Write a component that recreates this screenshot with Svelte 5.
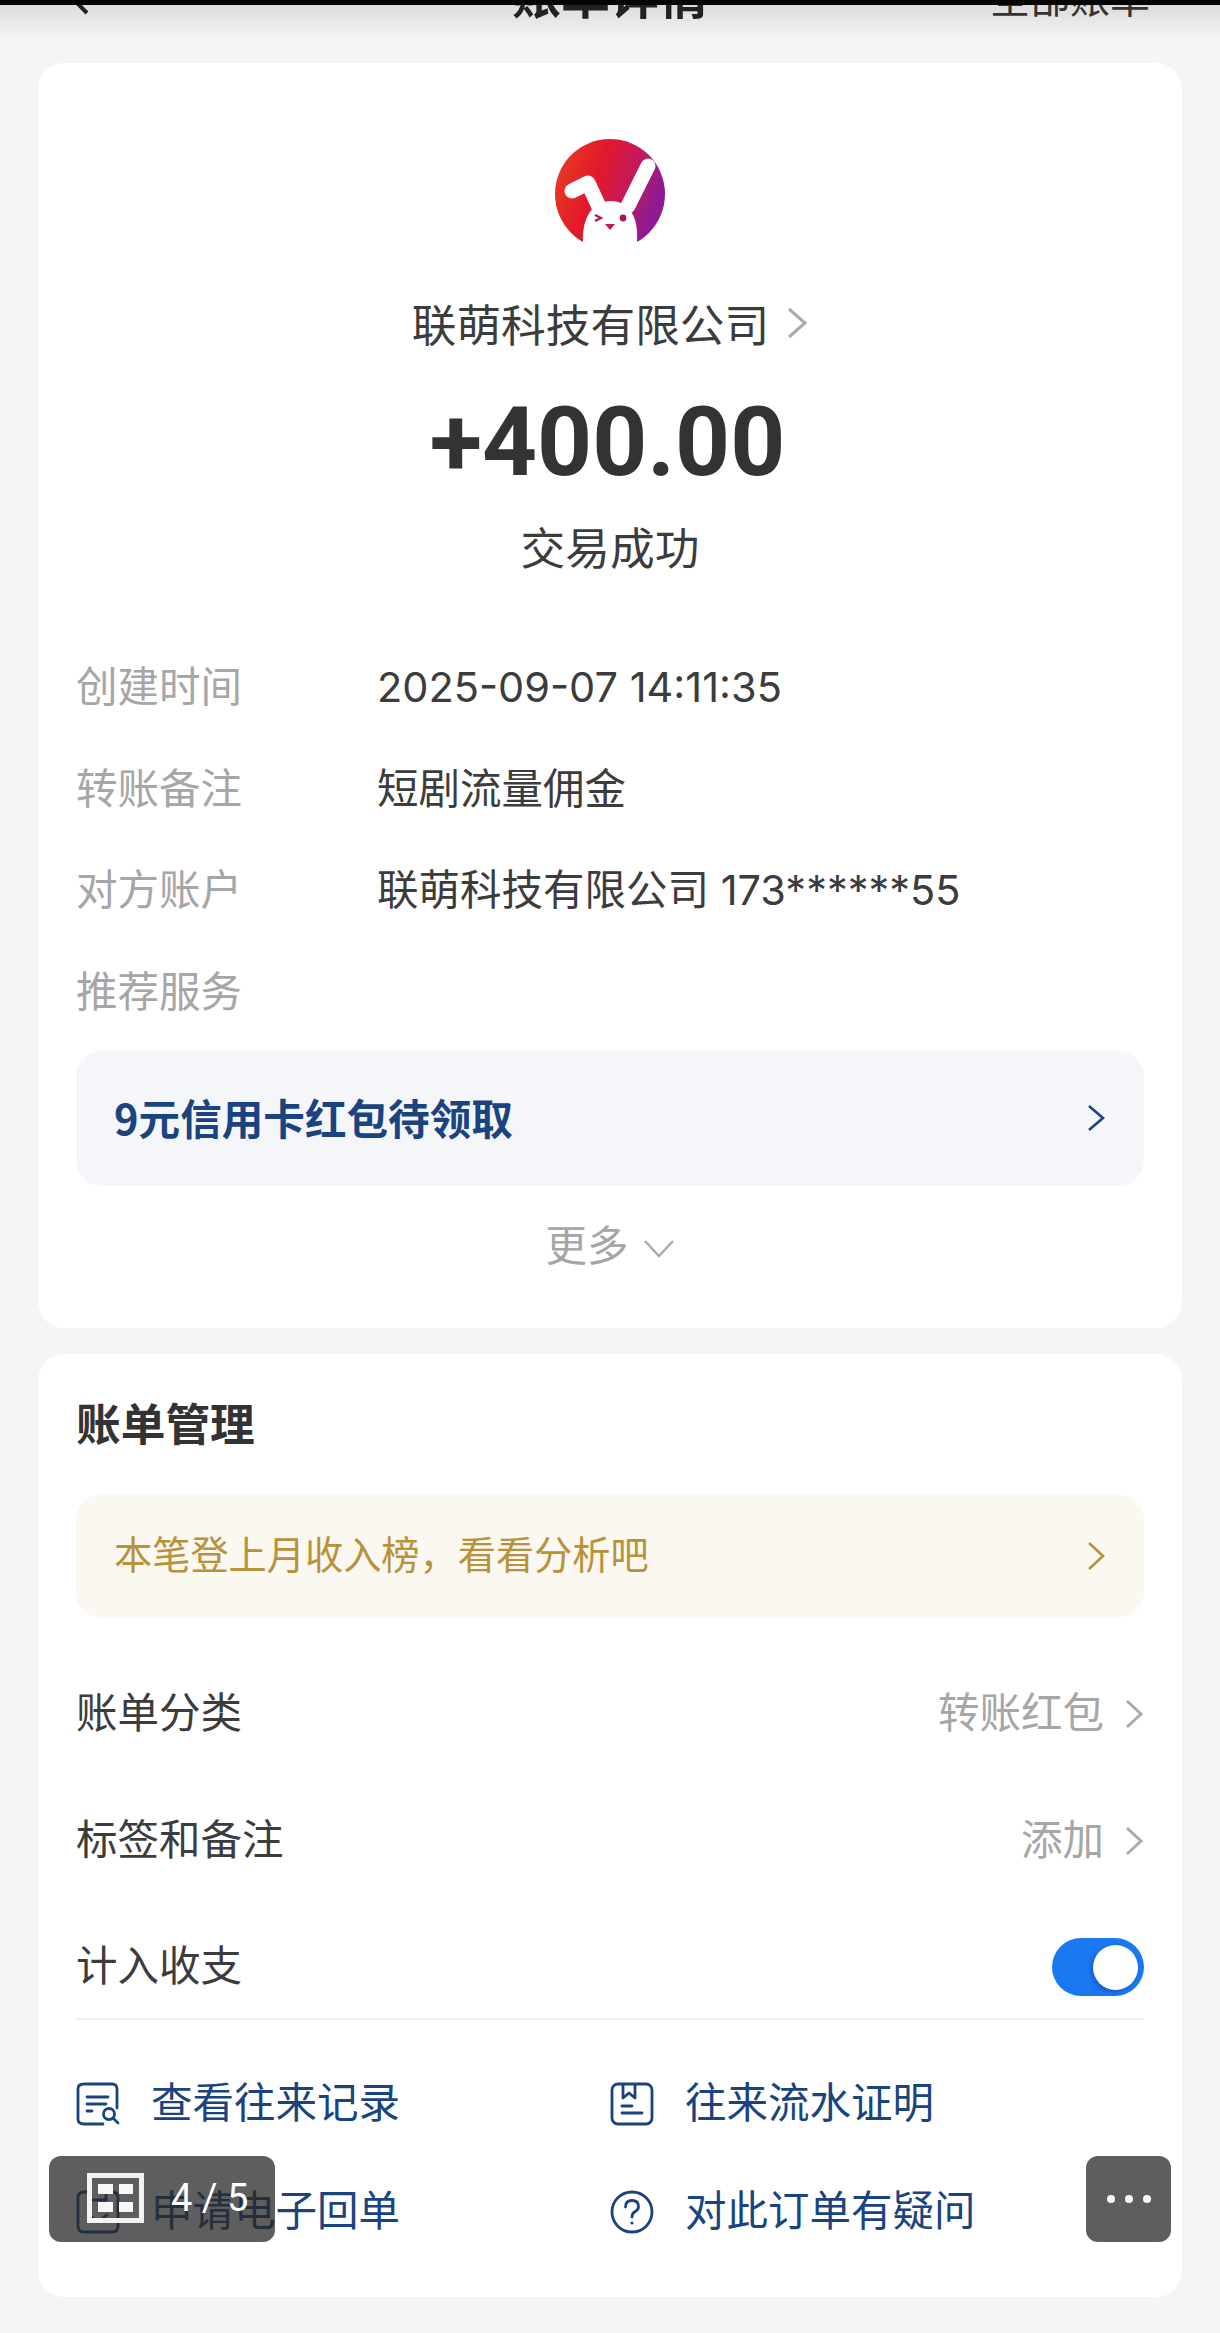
<script>
  const details = [
    { label: '创建时间', value: '2025-09-07 14:11:35' },
    { label: '转账备注', value: '短剧流量佣金' },
    { label: '对方账户', value: '联萌科技有限公司 173******55' },
    { label: '推荐服务', value: '' }
  ];
</script>

<div class="page">
  <div class="topbar"></div>
  <header class="nav">
    <svg class="back" width="20" height="32" viewBox="0 0 20 32"><path d="M17 2 L3 16 L17 30" fill="none" stroke="#222" stroke-width="4"/></svg>
    <span class="nav-title">账单详情</span>
    <span class="nav-right">全部账单</span>
  </header>

  <section class="card first">
    <svg class="logo" width="110" height="110" viewBox="0 0 110 110">
      <defs>
        <linearGradient id="lg" x1="0" y1="0" x2="1" y2="0.35">
          <stop offset="0" stop-color="#e8421f"/>
          <stop offset="0.45" stop-color="#e3182b"/>
          <stop offset="0.75" stop-color="#c01a5f"/>
          <stop offset="1" stop-color="#8e1a92"/>
        </linearGradient>
      </defs>
      <circle cx="55" cy="55" r="55" fill="url(#lg)"/>
      <path d="M93 27 L73 67" stroke="#fff" stroke-width="15" stroke-linecap="round" fill="none"/>
      <path d="M17 52 L33 44 L45 70" stroke="#fff" stroke-width="15" stroke-linecap="round" stroke-linejoin="round" fill="none"/>
      <path d="M28 110 V103 C27 78 38 62 56 62 C74 62 84 78 82 103 V110 Z" fill="#fff"/>
      <path d="M40 76 L46 79 L40 82" fill="none" stroke="#a3195b" stroke-width="2.2"/>
      <circle cx="68" cy="79" r="3.4" fill="#a3195b"/>
      <path d="M50 85 H60 L55 91 Z" fill="#c2185b"/>
    </svg>
    <div class="merchant">
      <span>联萌科技有限公司</span>
      <svg width="22" height="34" viewBox="0 0 22 34"><path d="M3 3 L19 17 L3 31" fill="none" stroke="#aaa" stroke-width="3"/></svg>
    </div>
    <div class="amount">+400.00</div>
    <div class="status">交易成功</div>

    <dl class="details">
      {#each details as d}
        <div class="detail">
          <dt>{d.label}</dt>
          <dd>{d.value}</dd>
        </div>
      {/each}
    </dl>

    <div class="promo">
      <span class="lift-sm">9元信用卡红包待领取</span>
      <svg width="20" height="28" viewBox="0 0 20 28"><path d="M3 2 L17 14 L3 26" fill="none" stroke="#1a4480" stroke-width="2.6"/></svg>
    </div>

    <div class="more">
      <span>更多</span>
      <svg width="32" height="20" viewBox="0 0 32 20"><path d="M2 3 L16 18 L30 3" fill="none" stroke="#aaa" stroke-width="2.4"/></svg>
    </div>
  </section>

  <section class="card second">
    <h2>账单管理</h2>
    <div class="notice">
      <span class="lift">本笔登上月收入榜，看看分析吧</span>
      <svg width="20" height="30" viewBox="0 0 20 30"><path d="M3 2 L17 15 L3 28" fill="none" stroke="#b8923a" stroke-width="2.6"/></svg>
    </div>

    <div class="row r1">
      <span class="lift">账单分类</span>
      <span class="row-val"><span class="lift">转账红包</span>
        <svg width="20" height="32" viewBox="0 0 20 32"><path d="M3 3 L17 16 L3 29" fill="none" stroke="#aaa" stroke-width="3"/></svg>
      </span>
    </div>
    <div class="row r2">
      <span class="lift">标签和备注</span>
      <span class="row-val"><span class="lift">添加</span>
        <svg width="20" height="32" viewBox="0 0 20 32"><path d="M3 3 L17 16 L3 29" fill="none" stroke="#aaa" stroke-width="3"/></svg>
      </span>
    </div>
    <div class="row r3">
      <span class="lift">计入收支</span>
      <span class="toggle"><span class="knob"></span></span>
    </div>

    <div class="actions">
      <div class="action">
        <svg width="44" height="44" viewBox="0 0 44 44" fill="none" stroke="#1a4480" stroke-width="2.8">
          <path d="M41 26 V7 Q41 2 36 2 H8 Q2 2 2 7 V37 Q2 42 8 42 H27" stroke-linecap="round"/>
          <path d="M11 15 H32 M11 22 H30 M11 29 H16" stroke-linecap="round"/>
          <circle cx="33" cy="32" r="5.5"/>
          <path d="M37 36 L42 41" stroke-linecap="round"/>
        </svg>
        <span class="lift">查看往来记录</span>
      </div>
      <div class="action">
        <svg width="44" height="44" viewBox="0 0 44 44" fill="none" stroke="#1a4480" stroke-width="2.8">
          <rect x="2" y="2" width="40" height="40" rx="6"/>
          <path d="M13 2 V16 L19 11 L25 16 V2" stroke-linejoin="round"/>
          <path d="M12 24 H22 M12 31 H32" stroke-linecap="round"/>
        </svg>
        <span class="lift">往来流水证明</span>
      </div>
      <div class="action">
        <svg width="44" height="44" viewBox="0 0 44 44" fill="none" stroke="#1a4480" stroke-width="2.8">
          <path d="M14 2 H8 Q2 2 2 8 V36 Q2 42 8 42 H36 Q42 42 42 36 V8 Q42 2 36 2 H30"/>
          <path d="M14 2 V10 H30 V2"/>
          <path d="M12 24 L22 32 L32 24"/>
        </svg>
        <span class="lift">申请电子回单</span>
      </div>
      <div class="action">
        <svg width="44" height="44" viewBox="0 0 44 44" fill="none" stroke="#1a4480" stroke-width="2.8">
          <circle cx="22" cy="22" r="20"/>
          <path d="M15.5 17 Q15.5 10.5 22 10.5 Q28.5 10.5 28.5 16.5 Q28.5 20 24.5 22 Q22 23.5 22 27" stroke-linecap="round"/>
          <circle cx="22" cy="33" r="1.6" fill="#1a4480" stroke="none"/>
        </svg>
        <span class="lift">对此订单有疑问</span>
      </div>
    </div>
  </section>

  <div class="overlay-left">
    <span class="grid-icon"><i></i><i></i><i></i><i></i></span>
    <span class="count">4 / 5</span>
  </div>
  <div class="overlay-right"><i></i><i></i><i></i></div>
</div>

<style>
  :global(body) { margin: 0; background: #f5f5f5; }
  .page {
    position: relative;
    width: 1220px;
    height: 2333px;
    overflow: hidden;
    background: #f5f5f5;
    color: #333;
    font-family: "Noto Sans CJK SC", "Noto Sans", sans-serif;
  }
  .lift { padding-bottom: 8px; }
  .lift-sm { padding-bottom: 3px; }
  .topbar { height: 5px; background: #050505; }
  .nav {
    height: 36px;
    margin-bottom: 22px;
    overflow: hidden;
    background: linear-gradient(#dcdcdc, #f5f5f5);
    display: grid;
    grid-template-columns: 1fr auto 1fr;
    align-items: start;
    color: #222;
  }
  .back { margin: -22px 0 0 70px; }
  .nav-title { font-size: 49px; font-weight: 700; line-height: 48px; margin-top: -36px; }
  .nav-right { justify-self: end; margin: -29px 70px 0 0; font-size: 40px; line-height: 40px; color: #333; }

  .card {
    margin: 0 38px;
    background: #fff;
    border-radius: 26px;
    box-sizing: border-box;
    padding: 0 38px 0 38px;
  }
  .first { height: 1265px; margin-bottom: 26px; display: flex; flex-direction: column; }
  .second { height: 943px; }

  .logo { display: block; align-self: center; margin-top: 76px; }
  .merchant {
    margin-top: 42px;
    height: 64px;
    display: flex;
    align-items: center;
    justify-content: center;
    gap: 17px;
    font-size: 44.7px;
    line-height: 64px;
    color: #3c3c3c;
  }
  .amount {
    margin-top: 32px;
    padding-right: 5px;
    text-align: center;
    font-family: Roboto, Inter, sans-serif;
    font-weight: 700;
    font-size: 96px;
    line-height: 110px;
    color: #333;
  }
  .status { margin-top: 17px; text-align: center; font-size: 44.7px; line-height: 64px; color: #3c3c3c; }

  .details { margin: 56px 0 0 0; padding: 0; }
  .detail { display: flex; height: 101.7px; align-items: baseline; }
  dt { width: 301px; font-size: 41.5px; line-height: 101.7px; color: #a6a6a6; }
  dd { margin: 0; font-size: 41.5px; line-height: 101.7px; color: #3c3c3c; font-family: Inter, "Noto Sans CJK SC", sans-serif; }

  .promo {
    margin-top: 10px;
    height: 135px;
    border-radius: 26px;
    background: #f4f6fa;
    display: flex;
    align-items: center;
    justify-content: space-between;
    padding: 0 38px;
    font-size: 41.6px;
    font-weight: 700;
    color: #1a4480;
  }
  .more {
    margin-top: 25px;
    display: flex;
    align-items: center;
    justify-content: center;
    gap: 14px;
    font-size: 41.5px;
    line-height: 64px;
    color: #a6a6a6;
  }
  .more svg { margin-top: 10px; }

  h2 { margin: 0; padding-top: 35px; font-size: 44.7px; line-height: 66px; font-weight: 700; color: #333; }
  .notice {
    margin-top: 40px;
    height: 122px;
    border-radius: 24px;
    background: #fbf8f1;
    display: flex;
    align-items: center;
    justify-content: space-between;
    padding: 0 38px;
    font-size: 38.2px;
    color: #b8923a;
  }
  .row { display: flex; height: 60px; align-items: center; justify-content: space-between; font-size: 41.5px; color: #3c3c3c; line-height: 60px; }
  .r1 { margin-top: 67px; }
  .r2 { margin-top: 67px; }
  .r3 { margin-top: 66px; }
  .row-val { display: inline-flex; align-items: center; gap: 20px; color: #a6a6a6; }
  .toggle {
    width: 92px;
    height: 58px;
    border-radius: 29px;
    background: #1a78f2;
    display: flex;
    align-items: center;
    justify-content: flex-end;
    padding-right: 6px;
    box-sizing: border-box;
  }
  .knob { width: 45px; height: 45px; border-radius: 50%; background: #fff; box-shadow: -2px 2px 4px rgba(0,40,120,.35); }

  .actions {
    margin-top: 21px;
    border-top: 2px solid #eeeeee;
    padding-top: 62px;
    display: grid;
    grid-template-columns: 534px 1fr;
    row-gap: 64px;
  }
  .action { display: flex; height: 44px; align-items: center; gap: 31px; font-size: 41.5px; line-height: 44px; color: #1a4480; }

  .overlay-left, .overlay-right {
    position: absolute;
    top: 2156px;
    height: 86px;
    border-radius: 12px;
    background: rgba(40, 40, 40, .75);
    color: #fff;
    box-sizing: border-box;
  }
  .overlay-left { left: 49px; width: 226px; }
  .grid-icon {
    position: absolute;
    left: 38px;
    top: 17px;
    width: 57px;
    height: 50px;
    box-sizing: border-box;
    border: 5px solid #f2f2f2;
    padding: 6px;
    display: grid;
    grid-template-columns: 1fr 1fr;
    grid-template-rows: 1fr 1fr;
    column-gap: 6px;
    row-gap: 8px;
  }
  .grid-icon i { display: block; background: #f6f6f6; }
  .count {
    position: absolute;
    left: 122px;
    top: 20px;
    font-family: Roboto, sans-serif;
    font-size: 38px;
    line-height: 44px;
    white-space: nowrap;
  }
  .overlay-right {
    left: 1086px;
    width: 85px;
    display: flex;
    align-items: center;
    justify-content: center;
    gap: 10px;
  }
  .overlay-right i { width: 8px; height: 8px; border-radius: 50%; background: #fff; }
</style>
